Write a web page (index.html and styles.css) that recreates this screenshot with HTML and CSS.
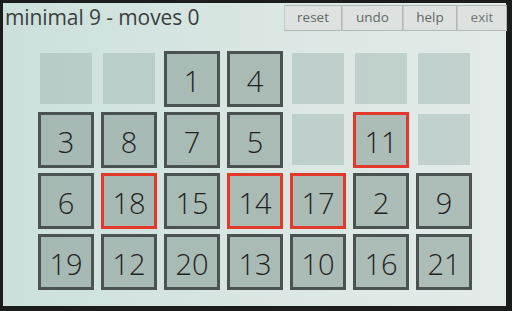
FILE: index.html
```html
<!DOCTYPE html>
<html lang="en">
<head>
    <meta charset="UTF-8">
    <title>minimal 9</title>
    <link rel="stylesheet" href="styles.css">
</head>
<body>
    <div class="screen">
        <header class="header">
            <h1 class="title">minimal 9 - moves 0</h1>
            <nav class="actions">
                <button class="action reset">reset</button>
                <button class="action undo">undo</button>
                <button class="action help">help</button>
                <button class="action exit">exit</button>
            </nav>
        </header>

        <main class="board">
            <div class="cell empty"></div>
            <div class="cell empty"></div>
            <div class="cell tile">1</div>
            <div class="cell tile">4</div>
            <div class="cell empty"></div>
            <div class="cell empty"></div>
            <div class="cell empty"></div>

            <div class="cell tile">3</div>
            <div class="cell tile">8</div>
            <div class="cell tile">7</div>
            <div class="cell tile">5</div>
            <div class="cell empty"></div>
            <div class="cell tile marked">11</div>
            <div class="cell empty"></div>

            <div class="cell tile">6</div>
            <div class="cell tile marked">18</div>
            <div class="cell tile">15</div>
            <div class="cell tile marked">14</div>
            <div class="cell tile marked">17</div>
            <div class="cell tile">2</div>
            <div class="cell tile">9</div>

            <div class="cell tile">19</div>
            <div class="cell tile">12</div>
            <div class="cell tile">20</div>
            <div class="cell tile">13</div>
            <div class="cell tile">10</div>
            <div class="cell tile">16</div>
            <div class="cell tile">21</div>
        </main>
    </div>
</body>
</html>
```

FILE: styles.css
```css
* {
    margin: 0;
    padding: 0;
    box-sizing: border-box;
}

body {
    background: #1b1d1d;
    width: 512px;
    height: 311px;
    overflow: hidden;
    font-family: "Open Sans", "DejaVu Sans", sans-serif;
}

.screen {
    margin: 3px 6px 0 3px;
    height: 303px;
    background: linear-gradient(90deg, #cce0dc 0%, #d8e6e2 45%, #e4ebe9 100%);
    display: flex;
    flex-direction: column;
}

.header {
    display: flex;
    justify-content: space-between;
    align-items: flex-start;
    height: 28px;
}

.title {
    font-size: 21px;
    font-weight: 400;
    color: #3a3f3e;
    padding: 1px 0 0 2px;
    line-height: 26px;
    letter-spacing: -0.1px;
}

.actions {
    display: flex;
    margin-top: 2px;
    margin-right: -1px;
}

.action {
    height: 26px;
    background: #dde2e0;
    border: 1px solid #b3b9b7;
    border-left-color: #c4cac8;
    color: #626766;
    font-family: "Open Sans", "DejaVu Sans", sans-serif;
    font-size: 13.5px;
    line-height: 22px;
    padding-bottom: 3px;
}

.reset { width: 58px; }
.undo { width: 61px; }
.help { width: 54px; }
.exit { width: 50px; color: #727776; }

.board {
    display: grid;
    grid-template-columns: repeat(7, 56px);
    grid-auto-rows: 56px;
    column-gap: 7px;
    row-gap: 5px;
    margin: 20px 0 0 35px;
}

.cell {
    display: flex;
    align-items: center;
    justify-content: center;
}

.empty {
    margin: 2px 2px 3px 2px;
    background: rgba(155, 180, 172, 0.45);
}

.tile {
    background: rgba(138, 158, 152, 0.6);
    border: 3px solid #4b5352;
    color: #1f2322;
    font-size: 29px;
    font-weight: 300;
    line-height: 1;
    padding-top: 2px;
}

.marked {
    border-color: #e3392b;
}
```
